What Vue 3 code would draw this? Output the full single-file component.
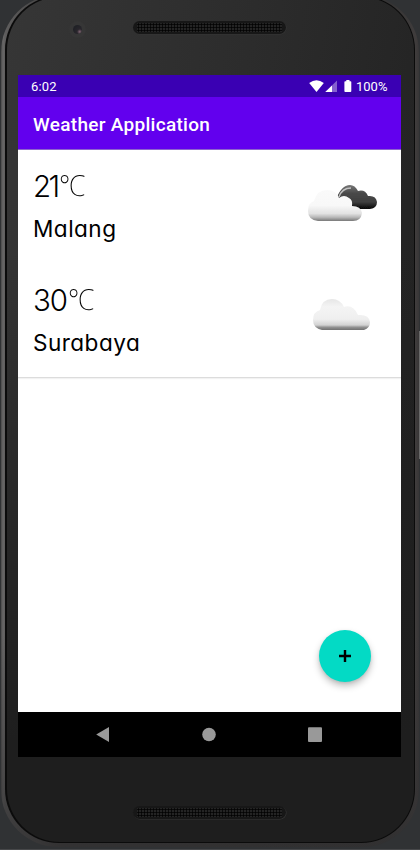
<script setup>
const cities = [
  { name: 'Malang', temp: '21', icon: 'broken' },
  { name: 'Surabaya', temp: '30', icon: 'cloud' },
]
</script>

<template>
  <div class="stage">
    <div class="phone">
      <div class="rim">
        <div class="body">
          <div class="top">
            <div class="camera"><i></i></div>
            <div class="speaker"><div class="mesh"></div></div>
          </div>

          <div class="screen">
            <div class="status">
              <span class="clock">6:02</span>
              <svg class="wifi" width="15" height="12" viewBox="0 0 15 12"><path d="M.2 3Q7.5-2.5 14.8 3L7.5 12Z" fill="#fff" /></svg>
              <svg class="signal" width="12" height="12" viewBox="0 0 12 12">
                <path d="M12 .4V12H.3Z" fill="#8560cf" />
                <path d="M7 5.4V12H.3Z" fill="#fff" />
              </svg>
              <svg class="battery" width="8" height="12" viewBox="0 0 8 12"><path d="M2.3 0h3.2v1.3h1q.8 0 .8.8v9q0 .9-.8.9H1.2q-.8 0-.8-.9v-9q0-.8.8-.8h1.1Z" fill="#fff" /></svg>
              <span class="percent">100%</span>
            </div>
            <header class="appbar">Weather Application</header>

            <main class="content">
              <section v-for="c in cities" :key="c.name" class="card">
                <div class="info">
                  <div class="temp" :class="c.icon"><span class="num">{{ c.temp }}</span><span class="unit">℃</span></div>
                  <div class="city">{{ c.name }}</div>
                </div>
                <svg v-if="c.icon === 'broken'" class="weather" width="80" height="60" viewBox="0 0 80 60">
                  <defs>
                    <linearGradient id="dark" x1="0" y1="0" x2="0" y2="1">
                      <stop offset="0" stop-color="#777" /><stop offset=".35" stop-color="#484848" />
                      <stop offset=".7" stop-color="#404040" /><stop offset="1" stop-color="#050505" />
                    </linearGradient>
                    <linearGradient id="light" x1="0" y1="0" x2="0" y2="1">
                      <stop offset="0" stop-color="#fafafa" /><stop offset=".5" stop-color="#f8f8f8" />
                      <stop offset=".76" stop-color="#e2e2e2" /><stop offset=".88" stop-color="#b8b8b8" />
                      <stop offset="1" stop-color="#787878" />
                    </linearGradient>
                    <filter id="soft" x="-10%" y="-10%" width="120%" height="120%"><feGaussianBlur stdDeviation=".75" /></filter>
                  </defs>
                  <g filter="url(#soft)">
                    <path d="M34 17C37 10 41 5 47 5Q52 5 55 11Q62 9 65 16Q73 15 74 22Q74 28 67 29H51Z" fill="url(#dark)" />
                    <path d="M36 17Q39 8 48 8" fill="none" stroke="#c2c2c2" stroke-width="1.4" />
                    <path d="M15 41Q5 40 5 31Q5 23 11 21Q14 10 24 10Q33 10 36 18Q41 14 46 18Q50 20 49 26Q58 26 59 33Q58 41 50 41Z" fill="url(#light)" />
                  </g>
                </svg>
                <svg v-else class="weather" width="80" height="60" viewBox="0 0 80 60">
                  <defs>
                    <linearGradient id="single" x1="0" y1="0" x2="0" y2="1">
                      <stop offset="0" stop-color="#e6e6e6" /><stop offset=".25" stop-color="#f4f4f4" />
                      <stop offset=".65" stop-color="#efefef" /><stop offset=".84" stop-color="#d2d2d2" />
                      <stop offset=".91" stop-color="#929292" /><stop offset="1" stop-color="#707070" />
                    </linearGradient>
                    <filter id="soft2" x="-10%" y="-10%" width="120%" height="120%"><feGaussianBlur stdDeviation=".75" /></filter>
                  </defs>
                  <path filter="url(#soft2)" d="M19 36Q10 34 10 26Q10 18 17 16Q19 5 29 5Q37 5 41 13Q50 10 55 21Q66 20 67 28Q67 34 61 36Z" fill="url(#single)" />
                </svg>
              </section>
              <button class="fab" aria-label="Add">
                <svg width="14" height="14" viewBox="0 0 14 14"><path d="M7 1v12M1 7h12" stroke="#000" stroke-width="2.4" /></svg>
              </button>
            </main>

            <nav class="nav">
              <svg width="16" height="16" viewBox="0 0 16 16"><path d="M1.2 7.5 14 0v15Z" fill="#999" /></svg>
              <svg width="16" height="16" viewBox="0 0 16 16"><circle cx="8" cy="7.5" r="6.8" fill="#999" /></svg>
              <svg width="16" height="16" viewBox="0 0 16 16"><rect x="1" y=".3" width="14" height="14.6" rx="1" fill="#999" /></svg>
            </nav>
          </div>

          <div class="bottom">
            <div class="speaker"><div class="mesh"></div></div>
          </div>
        </div>
      </div>
    </div>
    <div class="side"></div>
  </div>
</template>

<style>
body { margin: 0; background: #303234; }
</style>

<style scoped>
* { box-sizing: border-box; }
.stage { position: relative; width: 420px; height: 850px; overflow: hidden; background: #303234; border-bottom: 1px solid #47484a; }
.phone {
  width: 418px; height: 852px; margin: -5px 0 0 1px; padding: 1px 4px 4px 4px; border-radius: 57px;
  background: linear-gradient(180deg, transparent 75%, rgba(48,47,48,.7) 98%), linear-gradient(90deg, #4a4a4a 0, #686767 2px, #5e5d5d 4px, #3a3939 60px, #353434 390px, #3f3c3c 415px, #383637 418px);
}
.rim { height: 847px; padding: 1px 1px 1px 2px; border-radius: 54px; background: #0b0b0b; }
.body {
  height: 845px; padding: 0 9px 0 12px; border-radius: 53px; display: flex; flex-direction: column;
  background: linear-gradient(180deg, transparent 30%, #1e1e1e 88%), linear-gradient(100deg, #363636 0, #2c2c2c 45%, #1f1f1f 100%);
}
.top { height: 78px; flex: none; display: flex; align-items: flex-start; padding: 24px 0 0 51px; margin-left: -1px; }
.camera { width: 17px; height: 17px; border-radius: 50%; background: #363636; padding: 4px; }
.camera i { display: block; width: 9px; height: 9px; border-radius: 50%; background: radial-gradient(circle at 75% 75%, #806472 0, #29262c 28%, #202126 70%); }
.speaker { width: 153px; height: 13px; border-radius: 7px; padding: 2px 4px; background: #171717; box-shadow: .5px .5px 0 #373737; }
.top .speaker { margin-left: 47px; }
.mesh { height: 9px; background-image: radial-gradient(circle, #030303 0 .9px, #242424 1.3px); background-size: 3px 3px; }
.screen { width: 383px; height: 682px; flex: none; display: flex; flex-direction: column; background: #fff; margin-left: -1px; }
.status { height: 22px; background: #3a00b3; color: #fff; display: flex; align-items: center; padding: 0 13px; font: 400 13px/22px Roboto, sans-serif; }
.clock { flex: 1; padding-top: 1px; letter-spacing: .15px; }
.signal { margin-left: 1px; }
.battery { margin-left: 7px; }
.percent { margin-left: 4px; width: 32px; white-space: nowrap; padding-top: 1px; }
.appbar { height: 53px; background: #6200ee; color: #fff; padding-left: 15px; font: 500 19px/55px Roboto, sans-serif; letter-spacing: .3px; border-bottom: 1px solid #8d64cd; }
.content { height: 562px; position: relative; overflow: hidden; }
.card { height: 114px; padding: 17px 18px 0 15px; display: flex; justify-content: space-between; border-bottom: 1px solid #fff; color: #000; }
.card:nth-of-type(2) { border-bottom: 1px solid #dcdcdc; box-shadow: 0 1px 1px #f2f2f2; }
.info { font-family: Inter, "Open Sans", sans-serif; font-feature-settings: "cv11"; }
.temp { height: 38px; line-height: 38px; display: flex; white-space: nowrap; }
.num { font-size: 29.5px; font-weight: 300; letter-spacing: -1.2px; }
.temp.broken .num { letter-spacing: -2.6px; }
.unit { font-family: "Noto Sans", Roboto, sans-serif; font-size: 29px; font-weight: 200; line-height: 36px; transform: scaleX(.92); transform-origin: left; margin-left: 1px; }
.city { height: 32px; margin-top: 8px; font-size: 22.6px; line-height: 32px; font-weight: 400; letter-spacing: .45px; }
.weather { margin-top: 13px; }
.fab { position: absolute; right: 30px; bottom: 30px; width: 52px; height: 52px; border: 0; border-radius: 50%; background: #03dac5; padding: 0; display: flex; align-items: center; justify-content: center; box-shadow: 0 4px 7px rgba(0,0,0,.25), 0 1px 3px rgba(0,0,0,.08); }
.nav { height: 45px; background: #000; display: flex; justify-content: space-between; align-items: center; padding: 0 78px 0 77px; }
.bottom { padding: 49px 0 0 114px; }
.side { position: absolute; right: 0; top: 331px; width: 1px; height: 128px; background: #686868; }
</style>
